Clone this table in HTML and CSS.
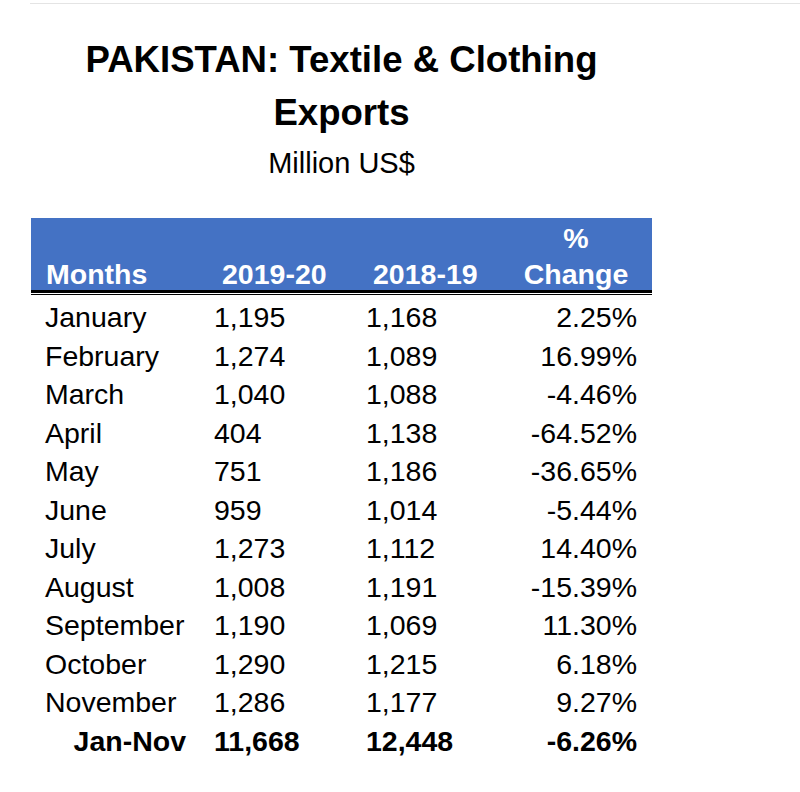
FILE: index.html
```html
<!DOCTYPE html>
<html lang="en">
<head>
<meta charset="utf-8">
<title>Pakistan Textile &amp; Clothing Exports</title>
<link rel="stylesheet" href="styles.css">
</head>
<body>
  <div class="topline"></div>
  <main class="sheet">
    <h1 class="title">PAKISTAN: Textile &amp; Clothing<br>Exports</h1>
    <p class="subtitle">Million US$</p>
    <div class="table">
      <div class="head">
        <div class="hc hc-month">Months</div>
        <div class="hc hc-y1">2019-20</div>
        <div class="hc hc-y2">2018-19</div>
        <div class="hc hc-chg">%<br>Change</div>
      </div>
      <div class="body">
        <div class="row"><span class="c1">January</span><span class="c2">1,195</span><span class="c3">1,168</span><span class="c4">2.25%</span></div>
        <div class="row"><span class="c1">February</span><span class="c2">1,274</span><span class="c3">1,089</span><span class="c4">16.99%</span></div>
        <div class="row"><span class="c1">March</span><span class="c2">1,040</span><span class="c3">1,088</span><span class="c4">-4.46%</span></div>
        <div class="row"><span class="c1">April</span><span class="c2">404</span><span class="c3">1,138</span><span class="c4">-64.52%</span></div>
        <div class="row"><span class="c1">May</span><span class="c2">751</span><span class="c3">1,186</span><span class="c4">-36.65%</span></div>
        <div class="row"><span class="c1">June</span><span class="c2">959</span><span class="c3">1,014</span><span class="c4">-5.44%</span></div>
        <div class="row"><span class="c1">July</span><span class="c2">1,273</span><span class="c3">1,112</span><span class="c4">14.40%</span></div>
        <div class="row"><span class="c1">August</span><span class="c2">1,008</span><span class="c3">1,191</span><span class="c4">-15.39%</span></div>
        <div class="row"><span class="c1">September</span><span class="c2">1,190</span><span class="c3">1,069</span><span class="c4">11.30%</span></div>
        <div class="row"><span class="c1">October</span><span class="c2">1,290</span><span class="c3">1,215</span><span class="c4">6.18%</span></div>
        <div class="row"><span class="c1">November</span><span class="c2">1,286</span><span class="c3">1,177</span><span class="c4">9.27%</span></div>
        <div class="row total"><span class="c1">Jan-Nov</span><span class="c2">11,668</span><span class="c3">12,448</span><span class="c4">-6.26%</span></div>
      </div>
    </div>
  </main>
</body>
</html>
```
FILE: styles.css
```css
html, body {
  margin: 0;
  padding: 0;
  background: #ffffff;
}
body {
  font-family: "Liberation Sans", Arial, sans-serif;
  color: #000000;
}
.topline {
  height: 1px;
  margin: 3px 0 0 30px;
  background: #e4e4e4;
}
.sheet {
  width: 621px;
  margin-left: 31px;
  padding-top: 29px;
}
.title {
  margin: 0;
  font-size: 36.6px;
  font-weight: bold;
  line-height: 53px;
  text-align: center;
}
.subtitle {
  margin: 7px 0 0;
  font-size: 29px;
  line-height: 34px;
  text-align: center;
}
.table {
  margin-top: 38px;
}
.head {
  display: grid;
  grid-template-columns: 183px 152px 150px 136px;
  align-items: end;
  height: 70px;
  padding-top: 2px;
  background: #4472c4;
  color: #ffffff;
  font-size: 28.5px;
  font-weight: bold;
  line-height: 36px;
  border-bottom: 3px solid #000000;
}
.hc-month { padding-left: 15px; }
.hc-y1 { padding-left: 8px; }
.hc-y2 { padding-left: 7px; }
.hc-chg { text-align: center; padding-right: 16px; }
.body {
  margin-top: 1px;
  border-top: 1px solid #000000;
  padding-top: 3px;
}
.row {
  display: grid;
  grid-template-columns: 183px 152px 150px 136px;
  height: 38.5px;
  font-size: 28.5px;
  line-height: 38.5px;
}
.c1 { padding-left: 14px; }
.c4 { text-align: right; padding-right: 15px; }
.total { font-weight: bold; }
.total .c1 { padding-left: 0; padding-right: 28px; text-align: right; }
```
